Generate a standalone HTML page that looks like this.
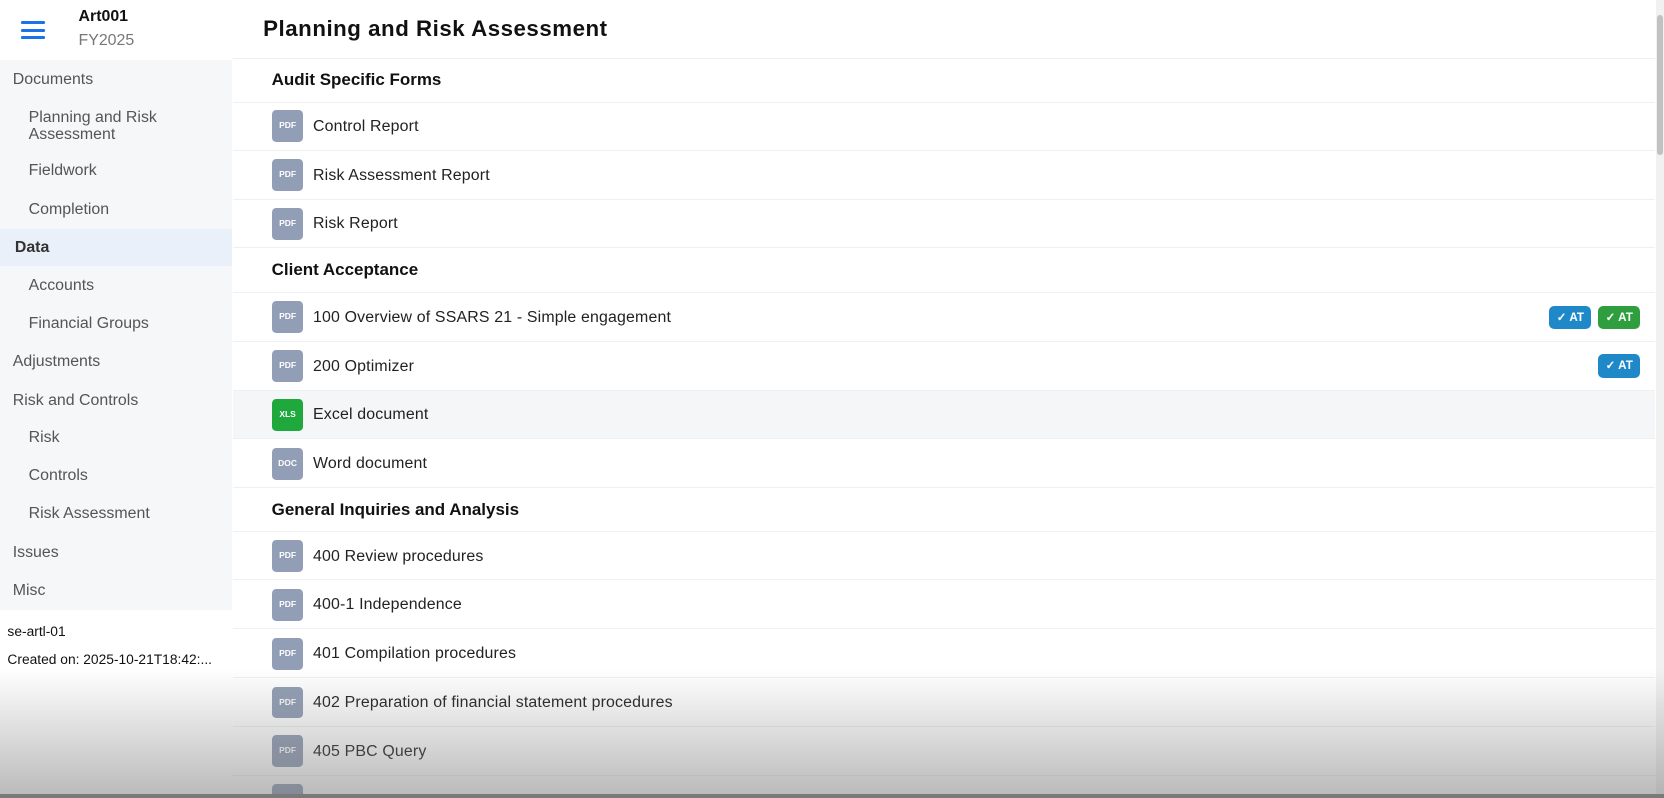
<!DOCTYPE html>
<html><head><meta charset="utf-8"><style>
*{margin:0;padding:0;box-sizing:border-box}
html,body{width:1664px;height:798px;overflow:hidden;background:#fff}
#w{zoom:1.06122;position:relative;width:1568px;height:752px;font-family:"Liberation Sans",sans-serif;color:#222}
.a{position:absolute;white-space:nowrap}
.side{position:absolute;left:0;top:57px;width:219px;height:518px;background:#f6f7f9}
.si{position:absolute;font-size:15px;color:#555;line-height:16px}
.row{position:absolute;left:220px;width:1340px;height:46px;border-bottom:1px solid #eef0f2}
.ic{position:absolute;left:36px;top:8px;width:30px;height:30px;border-radius:4px;background:#929eb5;color:#fff;font-size:8px;font-weight:bold;text-align:center;line-height:30px}
.rt{position:absolute;left:75px;top:15px;font-size:15px;color:#222;letter-spacing:0.15px}
.sec{position:absolute;left:220px;width:1340px;border-bottom:1px solid #eef0f2;font-size:16px;font-weight:bold;color:#111}
.b{position:absolute;top:12px;height:22px;border-radius:5px;color:#fff;font-size:11px;font-weight:bold;line-height:22px;padding:0 7px}
</style></head><body><div id="w">
<div class="a" style="left:20px;top:20px;width:22px;height:3px;background:#1a73e8;border-radius:1px"></div>
<div class="a" style="left:20px;top:27px;width:22px;height:3px;background:#1a73e8;border-radius:1px"></div>
<div class="a" style="left:20px;top:34px;width:22px;height:3px;background:#1a73e8;border-radius:1px"></div>
<div class="a" style="left:74px;top:8px;font-size:15px;font-weight:bold;color:#111">Art001</div>
<div class="a" style="left:74px;top:30px;font-size:15px;color:#777">FY2025</div>
<div class="a" style="left:248px;top:15px;font-size:21px;font-weight:bold;color:#111;letter-spacing:0.5px">Planning and Risk Assessment</div>
<div class="a" style="left:220px;top:55px;width:1340px;height:1px;background:#eceef0"></div>
<div class="side">
<div class="a" style="left:0;top:159px;width:219px;height:35px;background:#eaf0fa"></div>
</div>
<div class="si" style="left:12px;top:67px">Documents</div>
<div class="si" style="left:27px;top:103px">Planning and Risk<br>Assessment</div>
<div class="si" style="left:27px;top:153px">Fieldwork</div>
<div class="si" style="left:27px;top:189px">Completion</div>
<div class="si" style="left:14px;top:225px;font-weight:bold;color:#333">Data</div>
<div class="si" style="left:27px;top:261px">Accounts</div>
<div class="si" style="left:27px;top:297px">Financial Groups</div>
<div class="si" style="left:12px;top:333px">Adjustments</div>
<div class="si" style="left:12px;top:369px">Risk and Controls</div>
<div class="si" style="left:27px;top:404px">Risk</div>
<div class="si" style="left:27px;top:440px">Controls</div>
<div class="si" style="left:27px;top:476px">Risk Assessment</div>
<div class="si" style="left:12px;top:513px">Issues</div>
<div class="si" style="left:12px;top:548px">Misc</div>
<div class="a" style="left:7px;top:588px;font-size:13px;color:#111">se-artl-01</div>
<div class="a" style="left:7px;top:614px;font-size:13px;color:#111">Created on: 2025-10-21T18:42:...</div>

<div class="sec" style="top:56px;height:41px;padding:10px 36px">Audit Specific Forms</div>
<div class="row" style="top:96px"><div class="ic">PDF</div><div class="rt">Control Report</div></div>
<div class="row" style="top:142px"><div class="ic">PDF</div><div class="rt">Risk Assessment Report</div></div>
<div class="row" style="top:188px"><div class="ic">PDF</div><div class="rt">Risk Report</div></div>
<div class="sec" style="top:234px;height:42px;padding:11px 36px">Client Acceptance</div>
<div class="row" style="top:276px"><div class="ic">PDF</div><div class="rt">100 Overview of SSARS 21 - Simple engagement</div>
<div class="b" style="left:1240px;background:#1e88c8">✓ AT</div><div class="b" style="left:1286px;background:#2e9e3e">✓ AT</div></div>
<div class="row" style="top:322px"><div class="ic">PDF</div><div class="rt">200 Optimizer</div><div class="b" style="left:1286px;background:#1e88c8">✓ AT</div></div>
<div class="row" style="top:368px;background:#f5f6f8"><div class="ic" style="background:#1fa83c">XLS</div><div class="rt">Excel document</div></div>
<div class="row" style="top:414px"><div class="ic">DOC</div><div class="rt">Word document</div></div>
<div class="sec" style="top:460px;height:41px;padding:11px 36px">General Inquiries and Analysis</div>
<div class="row" style="top:501px"><div class="ic">PDF</div><div class="rt">400 Review procedures</div></div>
<div class="row" style="top:547px"><div class="ic">PDF</div><div class="rt">400-1 Independence</div></div>
<div class="row" style="top:593px"><div class="ic">PDF</div><div class="rt">401 Compilation procedures</div></div>
<div class="row" style="top:639px"><div class="ic">PDF</div><div class="rt">402 Preparation of financial statement procedures</div></div>
<div class="row" style="top:685px"><div class="ic">PDF</div><div class="rt">405 PBC Query</div></div>
<div class="row" style="top:731px"><div class="ic">PDF</div></div>
<div class="a" style="left:1560px;top:0;width:8px;height:752px;background:#f1f1f1"></div>
<div class="a" style="left:1561px;top:14px;width:6px;height:132px;background:#c1c1c1;border-radius:3px"></div>
<div class="a" style="left:0;top:630px;width:1568px;height:118px;background:linear-gradient(rgba(120,120,120,0),rgba(120,120,120,0.5))"></div>
<div class="a" style="left:0;top:748px;width:1568px;height:4px;background:#7a7a7a"></div>
</div></body></html>
